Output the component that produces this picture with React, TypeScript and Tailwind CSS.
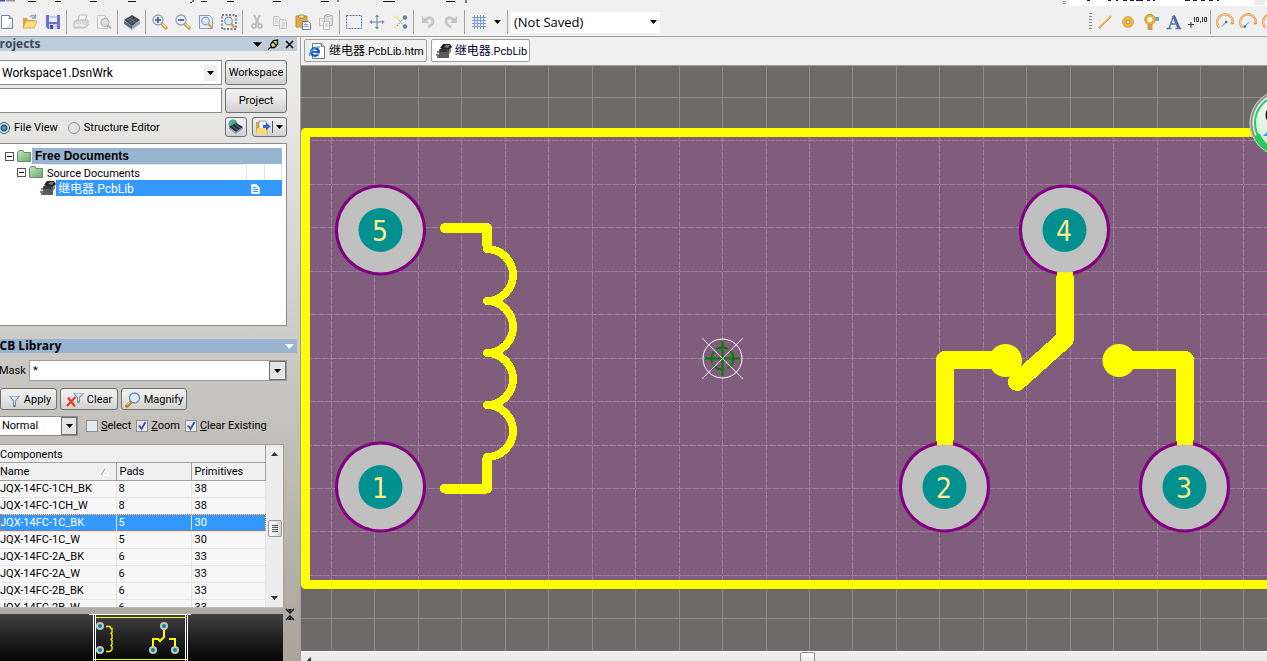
import type { ReactNode } from "react";
import { clsx } from "clsx";

const components = [
  { name: "JQX-14FC-1CH_BK", pads: 8, primitives: 38 },
  { name: "JQX-14FC-1CH_W", pads: 8, primitives: 38 },
  { name: "JQX-14FC-1C_BK", pads: 5, primitives: 30, selected: true },
  { name: "JQX-14FC-1C_W", pads: 5, primitives: 30 },
  { name: "JQX-14FC-2A_BK", pads: 6, primitives: 33 },
  { name: "JQX-14FC-2A_W", pads: 6, primitives: 33 },
  { name: "JQX-14FC-2B_BK", pads: 6, primitives: 33 },
  { name: "JQX-14FC-2B_W", pads: 6, primitives: 33 },
];

const pads = [
  { id: "5", x: 380, y: 230 },
  { id: "1", x: 380, y: 487 },
  { id: "4", x: 1064, y: 230 },
  { id: "2", x: 944, y: 487 },
  { id: "3", x: 1184, y: 487 },
];

function Icon({ children, size = 16 }: { children: ReactNode; size?: number }) {
  return (
    <svg width={size} height={size} viewBox="0 0 16 16" fill="none" className="shrink-0" aria-hidden="true">
      {children}
    </svg>
  );
}

function Caret({ className = "fill-black" }: { className?: string }) {
  return (
    <svg width="7" height="4" viewBox="0 0 7 4" className={clsx("shrink-0", className)} aria-hidden="true">
      <path d="M0 0h7L3.500 4z" />
    </svg>
  );
}

/* ---------- icons ---------- */

function NewIcon() {
  return (
    <Icon>
      <path d="M2.500 1.500h8l3 3v10h-11z" fill="#fff" stroke="#7187a8" />
      <path d="M10.500 1.500v3h3" fill="#dce6f3" stroke="#7187a8" />
      <path d="M13 6v8H7z" fill="#dbe5f2" />
    </Icon>
  );
}

function OpenIcon() {
  return (
    <Icon>
      <path d="M1 14V4h4l1 2h6v8z" fill="#e0a33c" />
      <path d="M1 14l3-7h11l-3 7z" fill="#ffdf8a" stroke="#d39a3a" strokeWidth=".8" />
      <path d="M8 3c2-2 4-2 5 0M13.500 0.500v3.500H10" stroke="#8ba3c4" strokeWidth="1.300" />
    </Icon>
  );
}

function SaveIcon() {
  return (
    <Icon>
      <path d="M1 1h14v14H3l-2-2z" fill="#6d70ce" />
      <path d="M4 1h8v7H4z" fill="#eef0ff" />
      <path d="M4 2h8v2H4z" fill="#c5cff3" />
      <path d="M4 10h8v5H4z" fill="#cdd2e8" />
      <path d="M5 11h3v4H5z" fill="#45489c" />
    </Icon>
  );
}

function PrintIcon() {
  return (
    <Icon>
      <path d="M5 7l1.500-6H14l-2 6z" fill="#f7f7f7" stroke="#bdbdbd" />
      <path d="M1 8l3-2h11v5l-3 3H1z" fill="#d8d8d8" stroke="#bababa" />
      <path d="M2 11h9" stroke="#f5f5f5" strokeWidth="1.500" />
    </Icon>
  );
}

function PreviewIcon() {
  return (
    <Icon>
      <path d="M1.500 1.500h7l3 3v10h-10z" fill="#f6f6f6" stroke="#c8c8c8" />
      <circle cx="9" cy="8.500" r="4" fill="#dedede" stroke="#b5b5b5" strokeWidth="1.300" />
      <path d="M12 11.500l3 3" stroke="#b0b0b0" strokeWidth="2" />
    </Icon>
  );
}

function BoardIcon() {
  return (
    <Icon>
      <path d="M0 7l8 5v4L0 10z" fill="#526477" />
      <path d="M16 7l-8 5v4l8-6z" fill="#8ba2b8" />
      <path d="M0 6l8-5 8 5-8 6z" fill="#39434f" />
      <path d="M3 6l6-3M5 8l6-3M7 9.500l6-3M5 4l6 4M3 5l5 4" stroke="#74828f" strokeWidth=".7" />
      <path d="M0 10l8 5.500 8-5.500" stroke="#c4d3e1" strokeWidth=".8" />
    </Icon>
  );
}

function ZoomIcon({ plus = false }: { plus?: boolean }) {
  return (
    <Icon>
      <path d="M10 10l4 4" stroke="#c9a050" strokeWidth="3.200" strokeLinecap="round" />
      <path d="M10.500 10l3 3" stroke="#ffe08a" strokeWidth="1.300" strokeLinecap="round" />
      <circle cx="6" cy="6" r="5" fill="#e7f1fb" stroke="#8ea3c0" strokeWidth="1.300" />
      <path d="M3 6h6" stroke="#4a658f" strokeWidth="1.800" />
      {plus && <path d="M6 3v6" stroke="#4a658f" strokeWidth="1.800" />}
    </Icon>
  );
}

function ZoomAreaIcon({ dashed = false }: { dashed?: boolean }) {
  return (
    <Icon>
      {dashed ? (
        <path d="M1 1h14v14H1z" stroke="#3e587c" strokeWidth="1.300" strokeDasharray="2 1.500" />
      ) : (
        <path d="M1.500 1.500h10l3 3v10h-13z" fill="#eaf1fa" stroke="#7f98bb" />
      )}
      <circle cx="7.500" cy="7" r="3.800" fill="#dbe9f8" stroke="#8298b6" strokeWidth="1.200" />
      <path d="M10.500 10l3 3.500" stroke="#dc9f35" strokeWidth="2.400" />
    </Icon>
  );
}

function CutIcon() {
  return (
    <Icon>
      <path d="M5 1l4.500 9M11 1L6.500 10" stroke="#bdbdbd" strokeWidth="1.800" />
      <circle cx="5" cy="12" r="2" stroke="#b5b5b5" strokeWidth="1.500" />
      <circle cx="11" cy="12" r="2" stroke="#b5b5b5" strokeWidth="1.500" />
    </Icon>
  );
}

function CopyIcon() {
  return (
    <Icon>
      <path d="M1.500 2.500h5l2 2v7h-7z" fill="#f3f3f3" stroke="#c0c0c0" />
      <path d="M3 5h3M3 7h3M3 9h3" stroke="#c8c8c8" />
      <path d="M7.500 5.500h5l2 2v7h-7z" fill="#f3f3f3" stroke="#c0c0c0" />
      <path d="M9 9h4M9 11h4M9 13h3" stroke="#c8c8c8" />
    </Icon>
  );
}

function PasteIcon() {
  return (
    <Icon>
      <path d="M1 2h11v11H1z" fill="#e5aa48" stroke="#bd8632" />
      <path d="M4 1h5v3H4z" fill="#f5e8c0" stroke="#927a44" strokeWidth=".8" />
      <path d="M7.500 7.500h6l2 2v6h-8z" fill="#fff" stroke="#5e779c" />
      <path d="M9 10.500h4M9 12.500h5" stroke="#7897c6" />
    </Icon>
  );
}

function PasteArrayIcon() {
  return (
    <Icon>
      <path d="M6.500 1.500h8v10h-8z" fill="#dfdfdf" stroke="#b6b6b6" />
      <path d="M8 0.500h4v2H8z" fill="#f5f5f5" stroke="#b6b6b6" />
      <path d="M1.500 4.500h5v7h-5z" fill="#f5f5f5" stroke="#b9b9b9" />
      <path d="M5.500 7.500h6v8h-6z" fill="#f5f5f5" stroke="#b9b9b9" />
      <path d="M7 10h3M7 12h3M3 7h2" stroke="#bfbfbf" />
    </Icon>
  );
}

function SelectAreaIcon() {
  return (
    <Icon>
      <path d="M.500 1.500h15v13H.500z" stroke="#51709c" strokeDasharray="2 1" />
    </Icon>
  );
}

function MoveIcon() {
  return (
    <Icon>
      <path d="M8 2v12M2 8h12" stroke="#6c829e" />
      <path d="M8 .500L10 3H6zM8 15.500L6 13h4zM.500 8L3 6v4zM15.500 8L13 10V6z" fill="#6c829e" />
    </Icon>
  );
}

function DeselectIcon() {
  return (
    <Icon>
      <path d="M5 4l7 8M12 4l-7 8" stroke="#8294ab" strokeDasharray="2 1" />
      <circle cx="3" cy="3" r="1.800" fill="#efe9a5" />
      <circle cx="3" cy="13" r="1.800" fill="#efe9a5" />
      <circle cx="6" cy="4" r="1.500" fill="#efe9a5" />
      <circle cx="13" cy="3.500" r="2.200" fill="#6683b0" />
      <circle cx="13" cy="12.500" r="2.200" fill="#6683b0" />
    </Icon>
  );
}

function UndoIcon({ flip = false }: { flip?: boolean }) {
  return (
    <Icon>
      <g transform={flip ? "translate(16 0) scale(-1 1)" : undefined}>
        <path d="M5 6c4-4 8-2 8 1.500S10 12 8 13" stroke="#c6c6c6" strokeWidth="2.800" />
        <path d="M2 2v7h7z" fill="#c6c6c6" />
      </g>
    </Icon>
  );
}

function GridIcon() {
  return (
    <Icon>
      <path d="M3.500 1v14M6.500 1v14M9.500 1v14M12.500 1v14M1 3.500h14M1 6.500h14M1 9.500h14M1 12.500h14" stroke="#7b9cce" />
    </Icon>
  );
}

function ArcIcon({ edge = false }: { edge?: boolean }) {
  return (
    <Icon size={18}>
      <path d="M3 13A7 7 0 1 1 15 9h-2" stroke="#dc9f58" strokeWidth="2" />
      <path d="M3 13A7 7 0 1 1 15 9" stroke="#ffd494" strokeWidth=".8" />
      <path d="M5 12l4-4" stroke="#8fa9d0" />
      <path d={edge ? "M4 11h2v2H4z" : "M8 7h2v2H8z"} fill="#3b67b0" />
    </Icon>
  );
}

function FolderIcon() {
  return (
    <svg width="14" height="12" viewBox="0 0 14 12" className="shrink-0" aria-hidden="true">
      <defs>
        <linearGradient id="folder" x1="0" y1="0" x2="1" y2="1">
          <stop offset="0" stopColor="#c4e6bb" />
          <stop offset="1" stopColor="#6ca774" />
        </linearGradient>
      </defs>
      <path d="M.500 11.500v-9l1.500-2h4l1 2h6.500v9z" fill="url(#folder)" stroke="#5f8f66" />
    </svg>
  );
}

function ChipIcon() {
  return (
    <Icon>
      <path d="M4 5l3-4h7l2 3-4 5z" fill="#222" />
      <path d="M8 4l2-2h4l-2 3z" fill="#7a7a7a" />
      <path d="M3 6h8l2 2v7H3z" fill="#5b5b5b" />
      <path d="M4 6h7v3H4z" fill="#343434" />
      <path d="M1 9h3M0 12h3M1 14h3" stroke="#4d4d4d" strokeWidth="1.500" />
      <path d="M13 6l2-1v4l-2 2z" fill="#8b8b8b" />
    </Icon>
  );
}

function HtmlIcon() {
  return (
    <Icon>
      <path d="M3.500.500h9l3 3v12h-12z" fill="#fff" stroke="#777" />
      <path d="M12.500.500v3h3" fill="#e9e1b3" stroke="#777" />
      <circle cx="6" cy="9" r="3.800" stroke="#1557b7" strokeWidth="2.400" fill="#fff" />
      <path d="M3 9h7" stroke="#1557b7" strokeWidth="1.800" />
      <path d="M8 10.500h3v2z" fill="#fff" />
      <path d="M1 13C-1 10 6 3 11 4" stroke="#42a2dd" strokeWidth="1.300" />
    </Icon>
  );
}

function FunnelIcon({ clear = false }: { clear?: boolean }) {
  if (clear) {
    return (
      <svg width="18" height="16" viewBox="0 0 18 16" fill="none" className="shrink-0" aria-hidden="true">
        <path d="M7 1h11l-4 5v5h-3V6z" fill="#7d95b5" />
        <path d="M8.500 1.500h8L13 5v4h-1V5z" fill="#dfe9f4" />
        <path d="M2 5.500l7 9M9.500 5L1 14" stroke="#ea3c25" strokeWidth="2.200" />
      </svg>
    );
  }
  return (
    <Icon>
      <path d="M3 4h11L10 9v6H7V9z" fill="#6f89ac" />
      <path d="M4.500 4.500h8L9 8.500V13H8V8.500z" fill="#dfe9f5" />
    </Icon>
  );
}

/* ---------- toolbar ---------- */

function ToolButton({ label, children }: { label: string; children: ReactNode }) {
  return (
    <button type="button" aria-label={label} className="flex h-6 w-[23px] shrink-0 items-center justify-center">
      {children}
    </button>
  );
}

function Separator() {
  return (
    <span className="flex h-6 w-[5px] shrink-0 justify-center">
      <span className="w-px bg-[#a0a0a0]" />
    </span>
  );
}

// Lower edge of the menu bar, scrolled mostly out of view.
function MenuEdge() {
  return (
    <div className="flex h-[6px] shrink-0 justify-between overflow-hidden">
      <svg width="480" height="6" fill="none" aria-hidden="true">
        <path d="M0 .500h5" stroke="#4343c8" strokeWidth="2" />
        <path d="M6 .500h9" stroke="#9b9b9b" strokeWidth="2" />
        <path
          d="M28 1.500h8M55 1.500h6M90 1.500h7M128 1.500h8M201 1.500h6M227 1.500h7M273 1.500h8M321 1.500h8M383 1.500h12M446 1.500h9M190 2.500h2M193 0v2M338 0v2M466 0v3"
          stroke="#111"
        />
      </svg>
      <svg width="204" height="6" fill="none" aria-hidden="true">
        <path d="M0 1.500h3M0 3.500h3" stroke="#9a9a9a" />
        <path d="M6 0h199v6H6z" fill="#fff" />
        <path d="M191 0h11v5h-11z" fill="#ececec" />
        <path d="M24 .500h3M45 .500h3M53 .500h2M60 .500h4M67 .500h4M73 .500h7M84 .500h3M90 .500h2M122 .500h5M130 .500h4M138 .500h4M146 .500h4M154 .500h2" stroke="#20202a" />
      </svg>
    </div>
  );
}

function Toolbar() {
  return (
    <div className="flex h-[31px] shrink-0 items-center justify-between overflow-hidden border-b border-[#a0a0a0] pt-[2px]">
      <div className="-ml-[5px] flex shrink-0 items-center">
        <ToolButton label="New"><NewIcon /></ToolButton>
        <ToolButton label="Open"><OpenIcon /></ToolButton>
        <ToolButton label="Save"><SaveIcon /></ToolButton>
        <Separator />
        <ToolButton label="Print"><PrintIcon /></ToolButton>
        <ToolButton label="Print preview"><PreviewIcon /></ToolButton>
        <Separator />
        <ToolButton label="Board view"><BoardIcon /></ToolButton>
        <Separator />
        <ToolButton label="Zoom in"><ZoomIcon plus /></ToolButton>
        <ToolButton label="Zoom out"><ZoomIcon /></ToolButton>
        <ToolButton label="Fit document"><ZoomAreaIcon /></ToolButton>
        <ToolButton label="Zoom area"><ZoomAreaIcon dashed /></ToolButton>
        <Separator />
        <ToolButton label="Cut"><CutIcon /></ToolButton>
        <ToolButton label="Copy"><CopyIcon /></ToolButton>
        <ToolButton label="Paste"><PasteIcon /></ToolButton>
        <ToolButton label="Paste array"><PasteArrayIcon /></ToolButton>
        <Separator />
        <ToolButton label="Select area"><SelectAreaIcon /></ToolButton>
        <ToolButton label="Move"><MoveIcon /></ToolButton>
        <ToolButton label="Deselect"><DeselectIcon /></ToolButton>
        <Separator />
        <ToolButton label="Undo"><UndoIcon /></ToolButton>
        <ToolButton label="Redo"><UndoIcon flip /></ToolButton>
        <Separator />
        <ToolButton label="Grid"><GridIcon /></ToolButton>
        <button type="button" aria-label="Grid options" className="flex h-6 w-[15px] items-center justify-center">
          <Caret />
        </button>
        <Separator />
        <div className="ml-px grid h-[21px] w-[149px] items-center bg-white">
          <select
            aria-label="Saved view"
            className="col-start-1 row-start-1 h-full w-full appearance-none pl-[3px] font-['Open_Sans',sans-serif] text-[13px] leading-5 text-black"
          >
            <option>(Not Saved)</option>
          </select>
          <span className="pointer-events-none col-start-1 row-start-1 mr-[3px] justify-self-end">
            <Caret />
          </span>
        </div>
      </div>

      <div className="-mr-[15px] flex shrink-0 items-center">
        <span className="mr-px h-[18px] w-[3px] bg-[repeating-linear-gradient(#8a8a8a_0_1px,transparent_1px_3px)]" />
        <ToolButton label="Line">
          <Icon>
            <path d="M2 14L14 2" stroke="#d99b35" strokeWidth="1.800" />
            <path d="M2 13.500L13.500 2" stroke="#ffcf70" />
          </Icon>
        </ToolButton>
        <ToolButton label="Pad">
          <Icon>
            <circle cx="8" cy="8" r="4" fill="#fff" stroke="#efb235" strokeWidth="3.200" />
            <circle cx="8" cy="8" r="5.500" stroke="#d9a050" strokeWidth=".8" />
            <circle cx="8" cy="8" r="2" fill="#f6edd8" stroke="#b48239" />
          </Icon>
        </ToolButton>
        <ToolButton label="Via">
          <Icon>
            <path d="M8 3h8v4H8z" fill="#58b1cf" />
            <path d="M4.500 8h5v8h-5z" fill="#d99a58" />
            <circle cx="7" cy="5.500" r="4" fill="#fff" stroke="#eeb43c" strokeWidth="3" />
            <circle cx="7" cy="5.500" r="5.300" stroke="#c78b34" strokeWidth=".7" />
          </Icon>
        </ToolButton>
        <ToolButton label="String">
          <Icon>
            <path d="M7.500 1.500L13 14.500" stroke="#4e6aa4" strokeWidth="3" />
            <path d="M7.500 2L3 14.500M4.500 10h6M.500 14.500h5M9.500 14.500h6" stroke="#5876ad" strokeWidth="1.500" />
          </Icon>
        </ToolButton>
        <ToolButton label="Coordinate">
          <svg width="20" height="12" viewBox="0 0 20 12" fill="none" className="shrink-0" aria-hidden="true">
            <path d="M1 8.500h6M4 6v6M7.500 1v5M9.500 1.500h2v4h-2zM13.500 5v2M15.500 1v5M17.500 1.500h2v4h-2z" stroke="#3d3d3d" />
          </svg>
        </ToolButton>
        <Separator />
        <ToolButton label="Arc by centre"><ArcIcon /></ToolButton>
        <ToolButton label="Arc by edge"><ArcIcon edge /></ToolButton>
        <ToolButton label="Arc any angle"><ArcIcon /></ToolButton>
      </div>
    </div>
  );
}

/* ---------- left panels ---------- */

const buttonLook =
  "flex items-center justify-center rounded-[3px] border border-[#707070] bg-linear-to-b from-[#f2f2f2] via-[#e6e6e6] to-[#d0d0d0]";

function Check({ label, checked = false }: { label: string; checked?: boolean }) {
  return (
    <label className="flex items-center gap-[3px]">
      <span className="grid size-[12px]">
        <input
          type="checkbox"
          defaultChecked={checked}
          className="peer col-start-1 row-start-1 size-[12px] appearance-none border border-[#8e8f8f] bg-[#e6e9ee]"
        />
        <svg
          viewBox="0 0 12 12"
          fill="none"
          className="pointer-events-none invisible col-start-1 row-start-1 size-[12px] peer-checked:visible"
          aria-hidden="true"
        >
          <path d="M3 5.500L5.500 9l4-7" stroke="#3f5aa6" strokeWidth="2" />
        </svg>
      </span>
      <span>
        <u>{label[0]}</u>
        {label.slice(1)}
      </span>
    </label>
  );
}

function Radio({ label, checked = false }: { label: string; checked?: boolean }) {
  return (
    <label className="flex items-center gap-1">
      <input
        type="radio"
        name="view"
        defaultChecked={checked}
        className="size-[12px] appearance-none rounded-full border border-[#8a8f94] bg-[#e4e4e4] checked:border-[#42596e] checked:bg-[radial-gradient(circle,#39b4e8_0_1px,#123f68_3px,#e8f2f8_4px)]"
      />
      {label}
    </label>
  );
}

function Expander() {
  return (
    <button type="button" aria-label="Collapse" className="flex size-[9px] shrink-0 items-center justify-center border border-[#555] bg-white">
      <span className="h-px w-[5px] bg-black" />
    </button>
  );
}

function ProjectsPanel() {
  return (
    <section>
      <header className="mr-[3px] flex h-[14px] items-center bg-[#bfcddb]">
        <h2 className="-ml-2 flex-1 font-['Open_Sans',sans-serif] text-xs leading-[14px] font-bold text-[#3c4957]">Projects</h2>
        <div className="flex items-center gap-[6px] pr-[3px]">
          <button type="button" aria-label="Panel menu">
            <svg width="9" height="5" viewBox="0 0 10 5"><path d="M0 0h10L5 5z" /></svg>
          </button>
          <button type="button" aria-label="Pin">
            <svg width="11" height="11" viewBox="0 0 11 11" fill="none">
              <path d="M2.500 5.500l3-4 4-.500v4l-3 3.500h-3z" fill="#e6df63" stroke="#111" strokeWidth="1.300" />
              <path d="M5 3l3 3M3 8L0 10.500" stroke="#111" strokeWidth="1.200" />
            </svg>
          </button>
          <button type="button" aria-label="Close">
            <svg width="9" height="9" viewBox="0 0 9 9"><path d="M1 1l7 7M8 1L1 8" stroke="#000" strokeWidth="1.500" /></svg>
          </button>
        </div>
      </header>

      <div className="mr-[13px] pt-[9px]">
        <div className="flex gap-[3px]">
          <div className="grid h-[25px] flex-1 items-center border border-l-0 border-[#8c8c8c] bg-white">
            <select aria-label="Workspace file" className="col-start-1 row-start-1 h-full w-full appearance-none pt-px pl-[2px] text-[12px]">
              <option>Workspace1.DsnWrk</option>
            </select>
            <span className="pointer-events-none col-start-1 row-start-1 mr-1 flex h-4 w-[13px] items-center justify-center justify-self-end bg-[#f0f0f0]">
              <Caret />
            </span>
          </div>
          <button type="button" className={clsx(buttonLook, "h-[25px] w-[62px] pt-px")}>Workspace</button>
        </div>
        <div className="mt-[3px] flex gap-[3px]">
          <input aria-label="Project file" className="h-[25px] min-w-0 flex-1 border border-l-0 border-[#8c8c8c] bg-white px-1" />
          <button type="button" className={clsx(buttonLook, "h-[25px] w-[62px] pt-px")}>Project</button>
        </div>
        <div className="mt-1 flex items-center">
          <div className="-ml-[2px] flex flex-1 items-center gap-[10px] pt-[2px]">
            <Radio label="File View" checked />
            <Radio label="Structure Editor" />
          </div>
          <button type="button" aria-label="Show board" className={clsx(buttonLook, "mr-[5px] h-5 w-[22px]")}>
            <Icon>
              <circle cx="5" cy="5" r="4.500" fill="#39b36a" />
              <path d="M1 5a4 4 0 0 1 4-4l-2 5z" fill="#5b9be0" />
              <path d="M1 8l7-4 7 4-7 5z" fill="#27303b" />
              <path d="M1 8v2l7 5v-2zM15 8v2l-7 5v-2z" fill="#8aa3bd" />
              <path d="M4 7l6 4M7 5l5 4" stroke="#66717f" />
            </Icon>
          </button>
          <div className={clsx(buttonLook, "h-5 w-[35px]")}>
            <button type="button" aria-label="Open document" className="flex flex-1 justify-center">
              <Icon>
                <path d="M1 15V3h5l1 2h6v10z" fill="#e3a33b" />
                <path d="M4 2h7v8H4z" fill="#f5f8ff" stroke="#7990b5" strokeWidth=".8" />
                <path d="M1 15l1.500-6H13l-1 6z" fill="#ffd878" />
                <path d="M8 6h3V3.500l4.500 4L11 11.500V9H8z" fill="#2f67cf" />
              </Icon>
            </button>
            <span className="h-3 w-px bg-[#555]" />
            <button type="button" aria-label="Open options" className="flex h-full w-[13px] items-center justify-center">
              <Caret />
            </button>
          </div>
        </div>

        <ul className="mt-[6px] h-[183px] border border-l-0 border-[#8c8c8c] bg-white pt-1 pr-1">
          <li className="flex h-4 items-center pl-[5px]">
            <Expander />
            <span className="mr-px ml-[3px]"><FolderIcon /></span>
            <span className="h-4 flex-1 bg-[#99b4d1] pl-[3px] font-['Liberation_Sans',sans-serif] text-xs leading-[17px] font-bold">
              Free Documents
            </span>
          </li>
          <li className="flex h-4 items-center pl-[17px]">
            <Expander />
            <span className="mr-px ml-[3px]"><FolderIcon /></span>
            <span className="h-4 flex-1 border-t border-[#e4e4e4] pl-[3px] leading-[17px]">Source Documents</span>
            <span className="h-4 w-[18px] border-l border-[#e4e4e4]" />
            <span className="h-4 w-[18px] border-x border-[#e4e4e4]" />
          </li>
          <li className="flex h-4 items-center pl-10">
            <ChipIcon />
            <span className="flex h-4 flex-1 items-center justify-between bg-[#3399ff] pt-px pr-[22px] pl-[2px] text-xs leading-4 text-white">
              继电器.PcbLib
              <svg width="9" height="10" viewBox="0 0 9 10" fill="none" aria-hidden="true">
                <path d="M.500.500h5l3 3v6h-8z" fill="#fff" stroke="#d8e8f8" />
                <path d="M2 3.500h3M2 5.500h5M2 7.500h5" stroke="#3399ff" />
              </svg>
            </span>
          </li>
        </ul>
      </div>
    </section>
  );
}

function ComponentTable() {
  return (
    <div className="mr-[16px] flex h-[164px] overflow-hidden border-y border-r border-[#a0a0a0] border-b-[#bbb] bg-[#f7f7f7]">
      <div className="flex-1 overflow-hidden">
        <table className="w-full table-fixed border-collapse text-left">
          <caption className="h-[18px] border-r border-b border-[#a0a0a0] bg-[#f0f0f0] pt-px text-left leading-[17px]">
            Components
          </caption>
          <colgroup>
            <col className="w-[116px]" />
            <col className="w-[75px]" />
            <col />
          </colgroup>
          <thead>
            <tr className="h-[17px] border-b border-[#a0a0a0] bg-[#f0f0f0]">
              <th className="border-r border-[#a0a0a0] p-0 pt-px font-normal">
                <span className="flex items-center justify-between pr-[7px]">
                  Name
                  <svg width="8" height="8" viewBox="0 0 8 8" fill="none" aria-hidden="true">
                    <path d="M0 7.500L4 .500" stroke="#999" />
                    <path d="M4 .500l4 7H0" stroke="#fff" />
                  </svg>
                </span>
              </th>
              <th className="border-r border-[#a0a0a0] p-0 pt-px pl-[3px] font-normal">Pads</th>
              <th className="border-r border-[#a0a0a0] p-0 pt-px pl-[3px] font-normal">Primitives</th>
            </tr>
          </thead>
          <tbody>
            {components.map((c) => (
              <tr
                key={c.name}
                className={clsx(
                  "h-[17px] border-b border-[#e4e4e4] leading-[14px]",
                  c.selected && "bg-[#3399ff] text-white outline-1 -outline-offset-1 outline-dotted outline-[#d2691e]",
                )}
              >
                <td className="border-r border-[#e4e4e4] p-0 pt-px whitespace-nowrap">{c.name}</td>
                <td className="border-r border-[#e4e4e4] p-0 pt-px pl-[2px]">{c.pads}</td>
                <td className="border-r border-[#e4e4e4] p-0 pt-px pl-[3px]">{c.primitives}</td>
              </tr>
            ))}
          </tbody>
        </table>
      </div>
      <div className="flex w-[17px] flex-col items-center bg-[#ededed] py-[7px]">
        <Caret className="rotate-180 fill-[#333]" />
        <span className="mt-16 flex h-[17px] w-[14px] flex-col items-center justify-center gap-px rounded-[2px] border border-[#979797] bg-linear-to-r from-white to-[#d5d5d5]">
          <span className="h-px w-[6px] bg-[#555]" />
          <span className="h-px w-[6px] bg-[#555]" />
          <span className="h-px w-[6px] bg-[#555]" />
          <span className="h-px w-[6px] bg-[#555]" />
        </span>
        <span className="mt-auto"><Caret className="fill-[#333]" /></span>
      </div>
    </div>
  );
}

function FootprintPreview() {
  return (
    <div className="flex min-h-0 flex-1 overflow-hidden">
      <div className="mt-[6px] flex-1 overflow-hidden bg-linear-to-b from-[#424242] to-[#060606]">
        <svg width="283" height="47" viewBox="0 614 283 47" fill="none" aria-hidden="true">
          <path d="M89 614.500h102M93.500 614v47M95.500 614v47M185.500 614v47M187.500 614v47M93 659.500h95" stroke="#fff" />
          <path d="M96 617.500h89M96 659.500h89" stroke="#ff0" />
          <path d="M106 626.500h4l1 2h1v4l-1 1 1 1v4l-1 1 1 1v4l-1 1 1 1v3l-1 1-1 1h-4" stroke="#ff0" strokeWidth="1.300" />
          <path d="M164 628v9l-4 4-2-2M153 649v-10h6M175 649v-10h-6" stroke="#ff0" strokeWidth="2" />
          {[[100, 626], [100, 650], [164, 626], [153, 650], [175, 650]].map(([x, y]) => (
            <g key={`${x}-${y}`}>
              <circle cx={x} cy={y} r="4" fill="#c4c4c4" />
              <circle cx={x} cy={y} r="2" fill="#008c8c" />
            </g>
          ))}
        </svg>
      </div>
      <svg width="17" height="20" viewBox="0 0 17 20" fill="none" aria-hidden="true">
        <path d="M3 1l4 4 4-4M3 12l4-4 4 4" stroke="#111" strokeWidth="1.500" />
        <path d="M5 1h4L7 4zM5 12h4L7 9z" fill="#111" />
      </svg>
    </div>
  );
}

function LibraryPanel() {
  return (
    <section className="mt-[13px] flex min-h-0 flex-1 flex-col">
      <header className="mr-[3px] flex h-[14px] items-center justify-between bg-[#99b4d1] pr-[3px]">
        <h2 className="-ml-2 font-['Open_Sans',sans-serif] text-xs leading-[14px] font-bold">PCB Library</h2>
        <button type="button" aria-label="Library menu">
          <svg width="9" height="5" viewBox="0 0 9 5" fill="#fff"><path d="M0 0h9L4.500 5z" /></svg>
        </button>
      </header>
      <div className="mt-[7px] mr-[13px] flex items-center">
        <label htmlFor="mask" className="-ml-px w-[30px] pt-px">Mask</label>
        <div className="flex h-[21px] flex-1 border border-[#9a9a9a] bg-white">
          <input id="mask" defaultValue="*" className="min-w-0 flex-1 px-[3px]" />
          <button type="button" aria-label="Recent masks" className="flex w-[17px] items-center justify-center border border-[#707070] bg-[#e5e5e5]">
            <Caret />
          </button>
        </div>
      </div>
      <div className="mt-[7px] flex gap-[3px]">
        <button type="button" className={clsx(buttonLook, "h-[22px] w-[57px] gap-[2px] pt-px")}>
          <FunnelIcon />
          Apply
        </button>
        <button type="button" className={clsx(buttonLook, "h-[22px] w-[58px] gap-[3px] pt-px")}>
          <FunnelIcon clear />
          Clear
        </button>
        <button type="button" className={clsx(buttonLook, "h-[22px] w-[66px] gap-[3px] pt-px")}>
          <Icon>
            <path d="M6 10l-4 4" stroke="#b67d20" strokeWidth="3.500" strokeLinecap="round" />
            <path d="M5 10l-3 3" stroke="#f9d36a" strokeWidth="1.300" />
            <circle cx="9.500" cy="6" r="5" fill="#dfeefc" stroke="#6c89b5" strokeWidth="1.300" />
          </Icon>
          Magnify
        </button>
      </div>
      <div className="mt-[6px] flex items-center">
        <div className="mr-2 grid h-5 w-[78px] border border-l-0 border-[#8c8c8c] bg-white">
          <select aria-label="Display mode" className="col-start-1 row-start-1 h-full w-full appearance-none pl-[2px]">
            <option>Normal</option>
          </select>
          <span className="pointer-events-none col-start-1 row-start-1 flex h-full w-4 items-center justify-center justify-self-end border border-[#707070] bg-[#e5e5e5]">
            <Caret />
          </span>
        </div>
        <div className="flex gap-[5px]">
          <Check label="Select" />
          <Check label="Zoom" checked />
          <Check label="Clear Existing" checked />
        </div>
      </div>
      <div className="mt-2">
        <ComponentTable />
      </div>
      <FootprintPreview />
    </section>
  );
}

/* ---------- editor ---------- */

function Tabs() {
  return (
    <nav className="flex h-[29px] shrink-0 gap-1 border-b border-[#a0a0a0] pt-[2px] pl-[3px] text-[11px]">
      <a href="#htm" className="flex h-[23px] items-center gap-1 rounded-[2px] border border-[#a0a0a0] pr-[2px] pl-1 text-black">
        <HtmlIcon />
        <span><span className="text-xs">继电器</span>.PcbLib.htm</span>
      </a>
      <a href="#pcblib" className="flex h-[23px] items-center gap-[3px] rounded-[2px] border border-[#a0a0a0] bg-white pr-[2px] pl-1 text-[#00003c]">
        <ChipIcon />
        <span><span className="text-xs">继电器</span>.PcbLib</span>
      </a>
    </nav>
  );
}

function Board() {
  const columns = Array.from({ length: 22 }, (_, i) => Math.floor(331.5 + i * 43.45));
  const rows = Array.from({ length: 13 }, (_, i) => Math.floor(97.4 + i * 43.45));

  return (
    <svg viewBox="301 66 966 585" preserveAspectRatio="xMinYMin slice" className="min-h-0 w-full flex-1 bg-[#6e6a69]" fill="none">
      <defs>
        <pattern id="hatch" width="8" height="8" patternUnits="userSpaceOnUse" x="3" shapeRendering="crispEdges">
          {[0, 1, 2, 3, 4, 5, 6, 7].map((n) => (
            <rect key={n} x={n} y={n} width="1" height="1" fill="#f0f" />
          ))}
        </pattern>
        <linearGradient id="bubble" x1="0" y1="0" x2="0" y2="1">
          <stop offset="0" stopColor="#fff" />
          <stop offset="1" stopColor="#c4edca" />
        </linearGradient>
      </defs>

      <g fill="#8f8b8b" shapeRendering="crispEdges">
        {columns.map((x) => (
          <rect key={x} x={x} y="66" width="1" height="585" />
        ))}
        {rows.map((y) => (
          <rect key={y} x="301" y={y} width="966" height="1" />
        ))}
      </g>
      <rect x="310" y="137" width="957" height="443" fill="url(#hatch)" />

      <path d="M1275 132.500H305.500v452H1275" stroke="#ff0" strokeWidth="9" strokeLinejoin="round" />

      {pads.map((p) => (
        <circle key={p.id} cx={p.x + 0.5} cy={p.y} r="45.500" fill="#800080" />
      ))}

      <g stroke="#ff0" strokeLinecap="round" strokeLinejoin="round" shapeRendering="crispEdges">
        <path d="M445 228h42v16M487 460v28.500h-42" strokeWidth="10" />
        <path d="M487 249a26 26 0 0 1 0 52a26 26 0 0 1 0 52a26 26 0 0 1 0 52a26 26 0 0 1 0 52" strokeWidth="8" />
        <path d="M1065 279v60l-48 43M945 438v-78h60M1185 438v-78h-66" strokeWidth="18" />
        <path d="M1065 272v10M945 436v9M1185 436v9" strokeWidth="16" strokeLinecap="butt" />
      </g>
      <circle cx="1005.500" cy="360.500" r="16.500" fill="#ff0" />
      <circle cx="1119" cy="360.500" r="16.500" fill="#ff0" />

      {pads.map((p) => (
        <g key={p.id}>
          <circle cx={p.x + 0.5} cy={p.y} r="42.500" fill="#c0c0c0" />
          <circle cx={p.x + 0.5} cy={p.y} r="22" fill="#009090" />
          <text
            x={p.x}
            y={p.y + 11}
            textAnchor="middle"
            fill="#ffec8b"
            className="font-['DejaVu_Sans_Condensed','Roboto',sans-serif] text-[28px] font-extralight"
          >
            {p.id}
          </text>
        </g>
      ))}

      {/* origin marker */}
      <path d="M722.500 340v38M704 358.500h38" stroke="#8f8b8b" />
      <circle cx="722.500" cy="358.500" r="11" stroke="#007d00" strokeWidth="2" strokeDasharray="12 3" />
      <path d="M722.500 341v35M705 358.500h35" stroke="#007d00" strokeWidth="2" />
      <circle cx="722.500" cy="358.500" r="19.500" stroke="#fff" />
      <path d="M702 338l41 41M743 338l-41 41" stroke="#fff" />

      {/* floating helper bubble */}
      <circle cx="1283" cy="123" r="32" fill="url(#bubble)" stroke="#929292" strokeWidth="3" />
      <circle cx="1283" cy="123" r="33" stroke="#d2d2d2" />
      <circle cx="1283" cy="123" r="28" stroke="#22cc5d" strokeWidth="2" />
      <path d="M1257 135a29 29 0 0 0 14 15" stroke="#22cc5d" strokeWidth="6" />
      <ellipse cx="1270" cy="115" rx="4.500" ry="7" fill="#111" />
      <path d="M1269 130l-6 6h4v4h4" fill="#3795f5" />
    </svg>
  );
}

export default function App() {
  return (
    <div className="flex h-screen w-full flex-col overflow-hidden bg-[#f0f0f0] font-['Roboto','Noto_Sans_CJK_SC',sans-serif] text-[11px] leading-[14px] text-black">
      <MenuEdge />
      <Toolbar />
      <div className="flex min-h-0 flex-1">
        <aside className="flex w-[301px] shrink-0 flex-col overflow-hidden border-r border-[#a0a0a0] bg-linear-to-b from-[#f0f0f0] to-[#a9a59d]">
          <ProjectsPanel />
          <LibraryPanel />
        </aside>
        <main className="flex min-w-0 flex-1 flex-col">
          <Tabs />
          <Board />
          <div className="flex h-[10px] shrink-0 items-start overflow-hidden border-t border-white bg-[#ececec]">
            <button type="button" aria-label="Scroll left" className="flex h-[17px] w-4 items-center justify-center">
              <svg width="4" height="7" viewBox="0 0 4 7"><path d="M4 0v7L0 3.500z" fill="#333" /></svg>
            </button>
            <div className="flex flex-1 justify-center pl-[30px]">
              <span className="h-[17px] w-[15px] rounded-[2px] border border-[#8a8a8a] bg-linear-to-b from-white to-[#ddd]" />
            </div>
          </div>
        </main>
      </div>
    </div>
  );
}
